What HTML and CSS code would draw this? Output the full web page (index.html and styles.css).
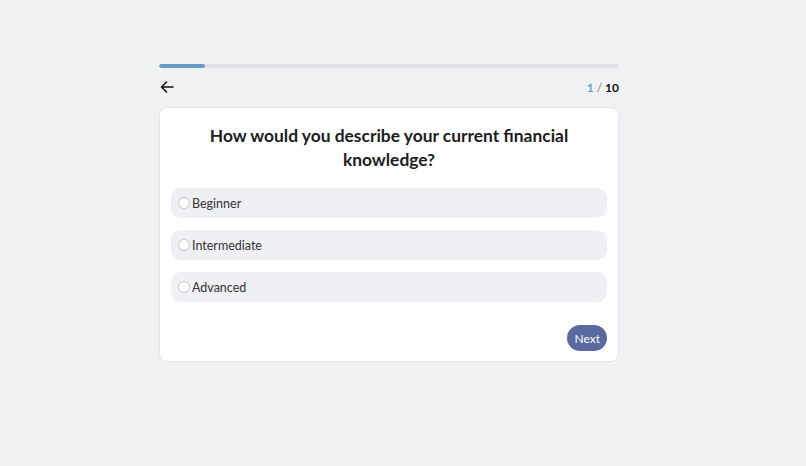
FILE: index.html
```html
<!DOCTYPE html>
<html>
<head>
<meta charset="utf-8">
<link rel="stylesheet" href="styles.css">
</head>
<body>
<div class="wrap">
  <div class="track"><div class="fill" style="width:10%"></div></div>
  <div class="nav">
    <svg class="back" width="14" height="12" viewBox="0 0 14 12"><path d="M13 6H1.5M6.5 1L1.5 6l5 5" fill="none" stroke="#111" stroke-width="1.6" stroke-linecap="round" stroke-linejoin="round"/></svg>
    <div class="count"><span class="cur">1</span> <span class="sep">/</span> 10</div>
  </div>
  <div class="card">
    <h1 class="q">How would you describe your current financial knowledge?</h1>
    <div class="opts">
      <label class="opt"><span class="radio"></span>Beginner</label>
      <label class="opt"><span class="radio"></span>Intermediate</label>
      <label class="opt"><span class="radio"></span>Advanced</label>
    </div>
    <div class="actions"><button class="next">Next</button></div>
  </div>
</div>
</body>
</html>
```
FILE: styles.css
```css
html, body { margin: 0; padding: 0; }
body {
  background: #f0f1f3;
  font-family: Lato, "Noto Sans", sans-serif;
  color: #222;
  width: 806px;
  height: 466px;
}
.wrap {
  width: 460px;
  margin: 0 auto;
  padding-top: 64px;
  position: relative;
  left: -14px;
}
.track {
  height: 4px;
  background: #dfe1e6;
  border-radius: 2px;
  overflow: hidden;
}
.fill {
  height: 100%;
  background: #6b9bc5;
  border-radius: 2px;
}
.nav {
  display: flex;
  justify-content: space-between;
  align-items: center;
  height: 22px;
  margin-top: 8px;
  margin-bottom: 9px;
}
.back { display: block; margin-left: 1px; }
.count {
  font-size: 12px;
  font-weight: 700;
  color: #111;
}
.cur { color: #6b9bc5; }
.sep { color: #777; font-weight: 400; }
.card {
  background: #fff;
  border: 1px solid #e3e4e8;
  border-radius: 8px;
  padding: 16px 11px 10px;
}
.q {
  margin: 0 0 16px;
  text-align: center;
  font-size: 17.4px;
  line-height: 24px;
  font-weight: 700;
  color: #1c1c1c;
  padding: 0 20px;
}
.opts { display: flex; flex-direction: column; gap: 12px; }
.opt {
  display: flex;
  align-items: center;
  height: 30px;
  background: #eff0f4;
  border-radius: 10px;
  padding-left: 7px;
  font-size: 12.5px;
  color: #333;
}
.radio {
  width: 10px;
  height: 10px;
  border: 1px solid #c4c4c8;
  border-radius: 50%;
  background: #fff;
  margin-right: 2px;
}
.actions {
  display: flex;
  justify-content: flex-end;
  margin-top: 23px;
}
.next {
  height: 26px;
  padding: 0 7px;
  border: none;
  border-radius: 13px;
  background: #5a6aa1;
  color: #fff;
  font-family: inherit;
  font-size: 12px;
}
```
